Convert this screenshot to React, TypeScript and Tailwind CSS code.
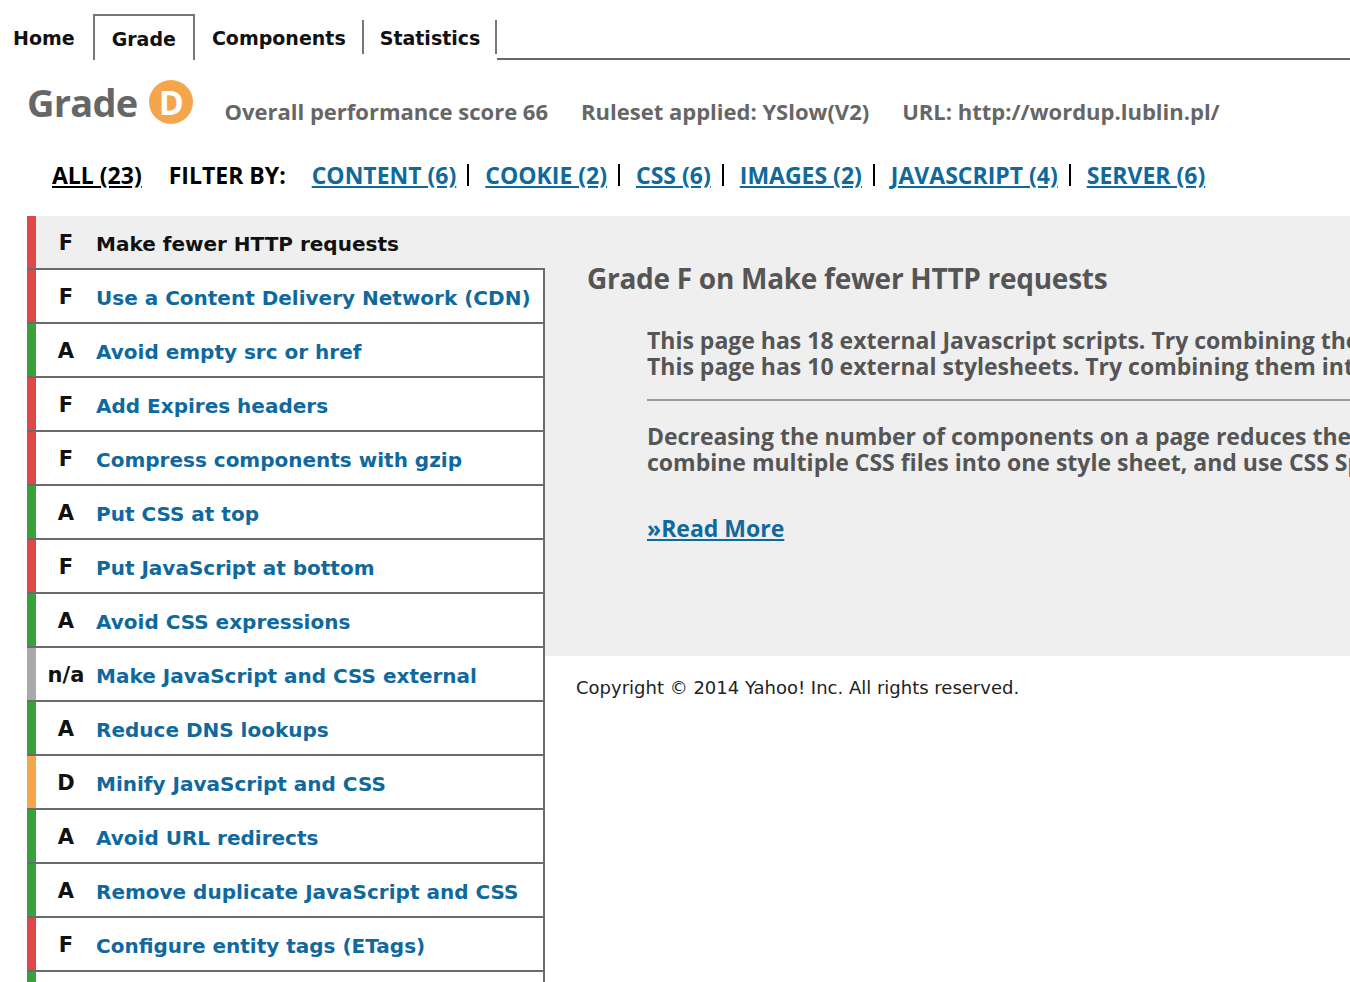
import React from "react";

type Rule = {
    grade: string;
    title: string;
};

const rules: Rule[] = [
    { grade: "F", title: "Make fewer HTTP requests" },
    { grade: "F", title: "Use a Content Delivery Network (CDN)" },
    { grade: "A", title: "Avoid empty src or href" },
    { grade: "F", title: "Add Expires headers" },
    { grade: "F", title: "Compress components with gzip" },
    { grade: "A", title: "Put CSS at top" },
    { grade: "F", title: "Put JavaScript at bottom" },
    { grade: "A", title: "Avoid CSS expressions" },
    { grade: "n/a", title: "Make JavaScript and CSS external" },
    { grade: "A", title: "Reduce DNS lookups" },
    { grade: "D", title: "Minify JavaScript and CSS" },
    { grade: "A", title: "Avoid URL redirects" },
    { grade: "A", title: "Remove duplicate JavaScript and CSS" },
    { grade: "F", title: "Configure entity tags (ETags)" },
    { grade: "A", title: "Make AJAX cacheable" },
];

const barColor = (grade: string) => {
    if (grade === "A") return "bg-[#38a23a]";
    if (grade === "D") return "bg-[#f5a64c]";
    if (grade === "n/a") return "bg-[#a9a9a9]";
    return "bg-[#df4848]";
};

const filters = ["CONTENT (6)", "COOKIE (2)", "CSS (6)", "IMAGES (2)", "JAVASCRIPT (4)", "SERVER (6)"];

const lucida = "font-['DejaVu_Sans',sans-serif]";
const myriad = "font-['Open_Sans',sans-serif]";

const App = () => {
    return (
        <div className="w-[1350px] h-[982px] overflow-hidden bg-white">

            {/* tabs */}
            <div className={`flex items-stretch pt-[14px] h-[60px] ${lucida} font-bold text-[19px] text-[#111]`}>
                <div className="pl-[13px] pr-[18px] pt-[2px] flex items-center">Home</div>
                <div className="px-[17px] pt-[2px] flex items-center border-x-2 border-t-2 border-[#777]">Grade</div>
                <div className="flex items-center pl-[17px] pr-[16px] pt-[2px] my-[6px] border-r-2 border-[#777]">Components</div>
                <div className="flex items-center pl-[16px] pr-[15px] pt-[2px] my-[6px] border-r-2 border-[#777]">Statistics</div>
                <div className="flex-1 border-b-2 border-[#666]" />
            </div>

            {/* grade summary */}
            <div className={`flex items-end pl-[27px] mt-[20px] ${myriad} text-[#666]`}>
                <div className="text-[38px] font-bold leading-[44px] tracking-[-0.02em]">Grade</div>
                <div className="ml-[12px] w-[44px] h-[44px] rounded-full bg-[#f5a64c] flex items-center justify-center text-white text-[34px] font-bold leading-none">
                    D
                </div>
                <div className="ml-[31px] flex gap-[33px] text-[22px] font-bold leading-[30px] -mb-[2px]">
                    <span>Overall performance score 66</span>
                    <span>Ruleset applied: YSlow(V2)</span>
                    <span>URL: http://wordup.lublin.pl/</span>
                </div>
            </div>

            {/* filter bar */}
            <div className={`flex items-center pl-[52px] mt-[36px] h-[30px] ${myriad} text-[23px] font-bold`}>
                <a className="text-black underline">ALL (23)</a>
                <span className="ml-[27px] text-black">FILTER BY:</span>
                <div className="flex items-center ml-[26px]">
                    {filters.map((f, i) => (
                        <div key={f} className="flex items-center">
                            {i > 0 && <span className="ml-[11px] mr-[16px] h-[22px] w-[2px] bg-black" />}
                            <a className="text-[#10699c] underline">{f}</a>
                        </div>
                    ))}
                </div>
            </div>

            {/* results */}
            <div className="flex mt-[26px] pl-[27px]">
                <div className={`w-[518px] shrink-0 ${lucida} font-bold text-[20px]`}>
                    {rules.map((r, i) => (
                        <div
                            key={r.title}
                            className={
                                i === 0
                                    ? "flex items-stretch h-[52px] bg-[#efefef]"
                                    : "flex items-stretch h-[54px] border-t-2 border-r-2 border-[#6b6b6b] bg-white"
                            }
                        >
                            <div className={`w-[9px] shrink-0 ${barColor(r.grade)}`} />
                            <div className="w-[60px] shrink-0 pt-[3px] flex items-center justify-center text-[#111] text-[21px] font-bold">
                                {r.grade}
                            </div>
                            <div className={`flex items-center pt-[3px] whitespace-nowrap ${i === 0 ? "text-[#111]" : "text-[#10699c]"}`}>
                                {r.title}
                            </div>
                        </div>
                    ))}
                </div>

                <div className="flex-1 min-w-0 flex flex-col">
                    <div className={`h-[440px] bg-[#efefef] overflow-hidden pl-[42px] pt-[46px] ${myriad} text-[#555] font-bold`}>
                        <div className="text-[28px] tracking-[-0.01em] leading-[32px]">Grade F on Make fewer HTTP requests</div>
                        <div className="pl-[60px] mt-[33px] text-[23px] leading-[26px] whitespace-nowrap">
                            <div>This page has 18 external Javascript scripts. Try combining them into one.</div>
                            <div>This page has 10 external stylesheets. Try combining them into one.</div>
                            <div className="mt-[20px] h-[2px] w-[900px] bg-[#999]" />
                            <div className="mt-[22px]">Decreasing the number of components on a page reduces the number of HTTP requests required to render the page, resulting in faster page loads.</div>
                            <div>combine multiple CSS files into one style sheet, and use CSS Sprites and image maps.</div>
                            <a className="block mt-[40px] text-[#10699c] underline">»Read More</a>
                        </div>
                    </div>
                    <div className={`pl-[31px] pt-[18px] ${lucida} text-[18px] text-[#222]`}>
                        Copyright © 2014 Yahoo! Inc. All rights reserved.
                    </div>
                </div>
            </div>
        </div>
    );
};

export default App;
